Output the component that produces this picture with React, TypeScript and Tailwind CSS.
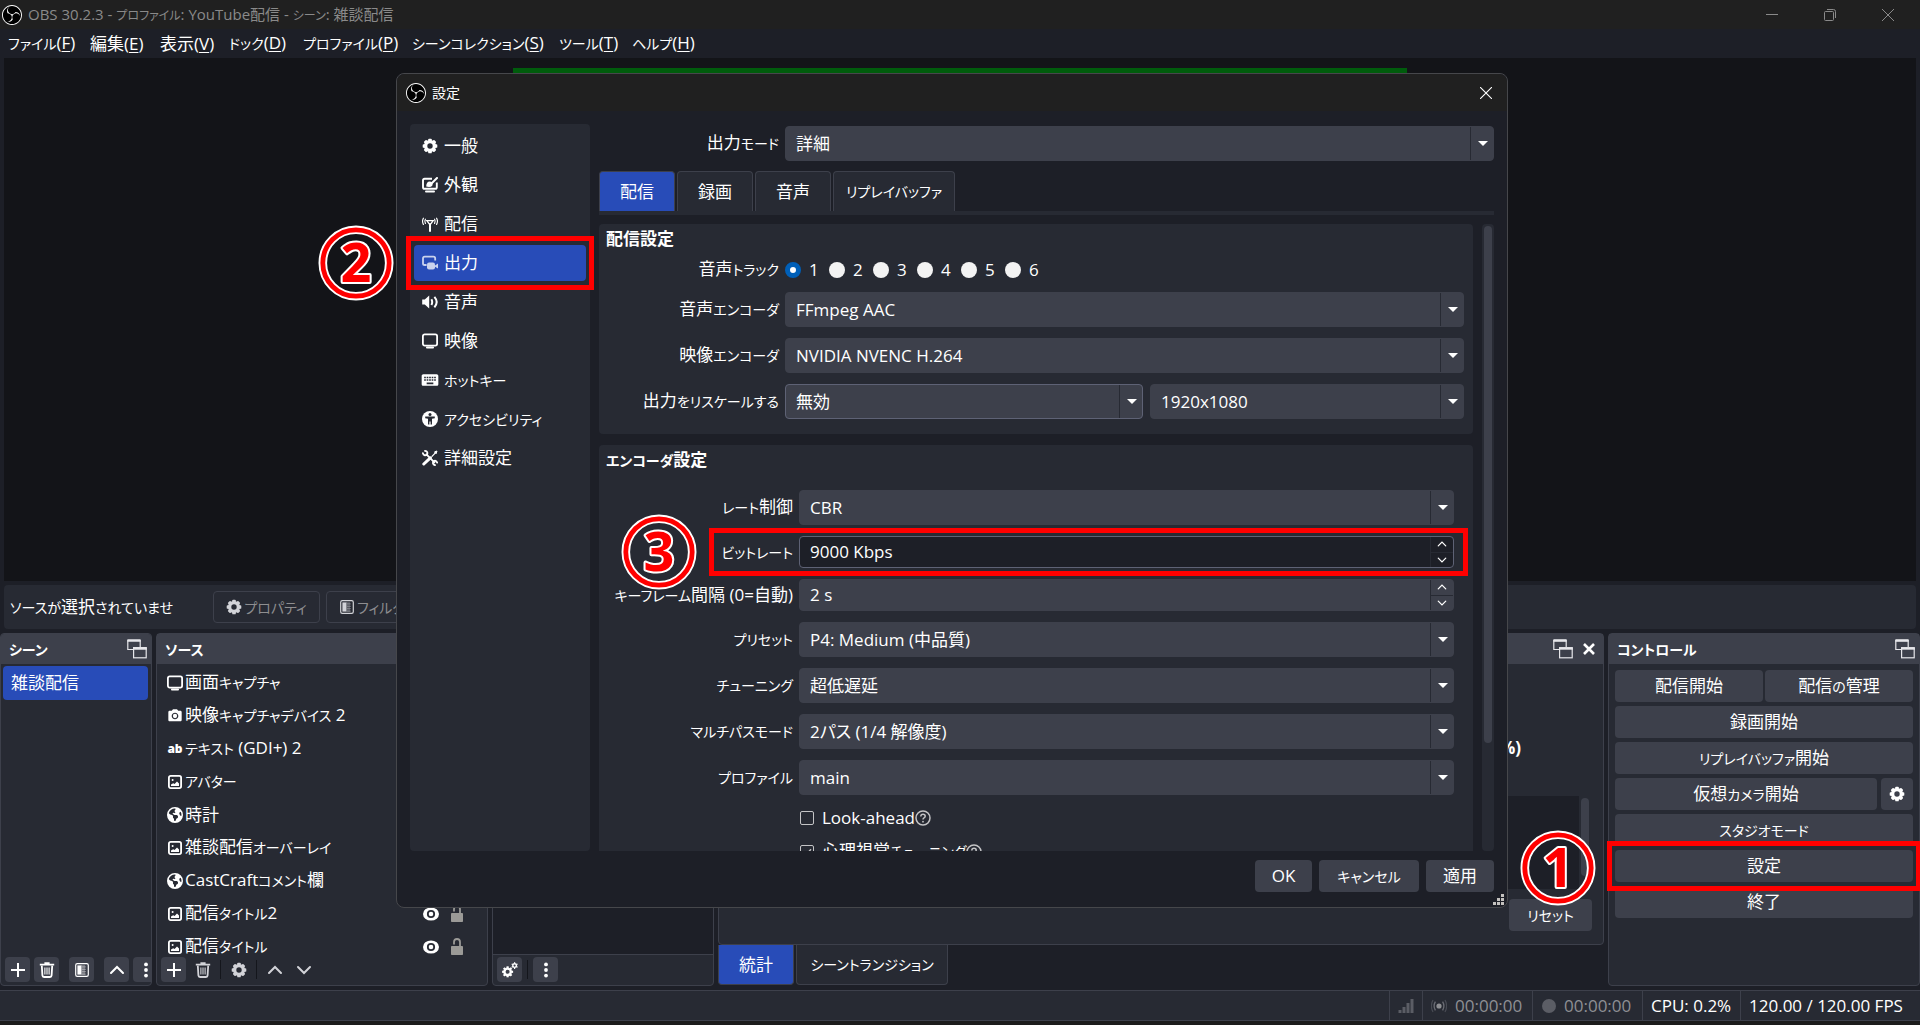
import React from "react";
import { SiObsstudio } from "react-icons/si";
import { MdKeyboard, MdPhotoCamera } from "react-icons/md";
import { FaEarthAmericas } from "react-icons/fa6";

type P = { className?: string };

/* Interface text: kana is set a step smaller than kanji and Latin. */
function T({ children, small = false }: { children: string; small?: boolean }) {
  const parts = children.split(/([\u3040-\u30ff]+)/).filter(Boolean);
  return (
    <span className="whitespace-nowrap">
      {parts.map((p, i) =>
        /[\u3040-\u30ff]/.test(p) ? (
          <span key={i} className={small ? "text-[12px]" : "text-[14px]"}>{p}</span>
        ) : (
          p
        ),
      )}
    </span>
  );
}

function Gear({ className = "size-4" }: P) {
  return (
    <svg viewBox="0 0 16 16" className={className} fill="currentColor" aria-hidden="true">
      <circle cx="8" cy="8" r="4.4" fill="none" stroke="currentColor" strokeWidth="3.4" />
      {[0, 45, 90, 135, 180, 225, 270, 315].map((a) => (
        <rect key={a} x="6.2" y="0.7" width="3.6" height="3" rx="0.9" transform={`rotate(${a} 8 8)`} />
      ))}
    </svg>
  );
}
function Monitor({ className = "size-4" }: P) {
  return (
    <svg viewBox="0 0 16 16" className={className} aria-hidden="true">
      <rect x="0.9" y="1.4" width="14.2" height="11.2" rx="1.8" fill="none" stroke="currentColor" strokeWidth="1.8" />
      <rect x="4" y="13.6" width="8" height="1.8" rx="0.9" fill="currentColor" />
    </svg>
  );
}
function Appearance() {
  return (
    <svg viewBox="0 0 16 16" className="size-4" fill="none" stroke="currentColor" aria-hidden="true">
      <path d="M10 1.8H2.6Q1 1.8 1 3.4V10.2Q1 11.8 2.6 11.8H13.2Q14.8 11.8 14.8 10.2V5.5" strokeWidth="1.9" />
      <path d="M15 1L9.5 6.5" strokeWidth="2" strokeLinecap="round" />
      <path d="M4.2 9.6Q4.4 4.4 8 4.6Q11.4 5.4 10.4 8.4Q8.8 10.8 4.2 9.6Z" fill="currentColor" stroke="none" />
      <path d="M4 14.6H12" strokeWidth="2" strokeLinecap="round" />
    </svg>
  );
}
function Antenna() {
  return (
    <svg viewBox="0 0 16 16" className="size-4" fill="none" stroke="currentColor" strokeLinecap="round" aria-hidden="true">
      <path d="M8 8V15" strokeWidth="2" />
      <path d="M4.8 4.6L8 9L11.2 4.6Z" strokeWidth="1.3" />
      <path d="M3.4 3.2Q2.2 5.2 3.4 7.4M12.6 3.2Q13.8 5.2 12.6 7.4" strokeWidth="1.2" />
      <path d="M1.4 2.2Q-0.3 5.2 1.4 8.4M14.6 2.2Q16.3 5.2 14.6 8.4" strokeWidth="1.2" />
    </svg>
  );
}
function OutputIcon() {
  return (
    <svg viewBox="0 0 16 16" className="size-4" aria-hidden="true">
      <path d="M4.6 10H2.8Q1 10 1 8.4V3.4Q1 1.6 2.8 1.6H11.4Q13.2 1.6 13.2 3.4V5.6" fill="none" stroke="currentColor" strokeWidth="1.8" />
      <rect x="5" y="7.4" width="8" height="7" rx="2" fill="currentColor" />
      <path d="M12.6 10.8L16 8.6V13.6L12.6 11.6Z" fill="currentColor" />
    </svg>
  );
}
function Speaker() {
  return (
    <svg viewBox="0 0 16 16" className="size-4" aria-hidden="true">
      <path d="M0.2 5.6H2.8L7.2 1.6V14.4L2.8 10.6H0.2Z" fill="currentColor" />
      <path d="M9.4 5.2Q11 8 9.4 10.9M12.4 2.8Q17 8 12.4 13.3" fill="none" stroke="currentColor" strokeWidth="2" />
    </svg>
  );
}
function Accessibility() {
  return (
    <svg viewBox="0 0 16 16" className="size-4" aria-hidden="true">
      <circle cx="8" cy="8" r="8" fill="currentColor" />
      <circle cx="8" cy="3.4" r="1.5" fill="#272a33" />
      <path d="M3.2 5.6H12.8V7.2L10 7.8V13.6H8.6V10.4H7.4V13.6H6V7.8L3.2 7.2Z" fill="#272a33" />
    </svg>
  );
}
function Tools() {
  return (
    <svg viewBox="0 0 16 16" className="size-4" fill="none" stroke="currentColor" strokeLinecap="round" aria-hidden="true">
      <path d="M1.8 14L8.4 7.8" strokeWidth="3" />
      <path d="M10 6.4L13.6 2.6" strokeWidth="1.3" />
      <path d="M12.8 1.8L15 1L14.2 3.4Z" strokeWidth="1" fill="currentColor" />
      <path d="M4.4 4.4L12.4 12.4" strokeWidth="1.8" />
      <path d="M3 0.9Q6.4 1.4 5 4.8Q2 6.4 0.9 3.2M15.2 12.6Q13.8 9.6 11.4 11.4Q10 14 13 15.2" strokeWidth="1.8" />
    </svg>
  );
}
function Picture() {
  return (
    <svg viewBox="0 0 16 16" className="size-4" aria-hidden="true">
      <rect x="1.9" y="1.9" width="12.2" height="12.2" rx="1.8" fill="none" stroke="currentColor" strokeWidth="1.8" />
      <circle cx="5.6" cy="6" r="1" fill="currentColor" />
      <path d="M4 12V10.6L6.2 9.2L7.6 10L10 7.4L12 9.6V12Z" fill="currentColor" />
    </svg>
  );
}
function AbIcon() {
  return <span className="w-4 text-center font-['Open_Sans'] text-xs leading-4 font-extrabold">ab</span>;
}
function FilterIcon({ className = "size-4" }: P) {
  return (
    <svg viewBox="0 0 16 16" className={className} aria-hidden="true">
      <rect x="1.7" y="1.7" width="12.6" height="12.6" rx="1.6" fill="none" stroke="currentColor" strokeWidth="1.2" />
      <rect x="3.4" y="3.4" width="4" height="9.2" fill="currentColor" />
      <path d="M8 3.4V12.6M10 3.4V12.6" stroke="currentColor" strokeWidth="1.1" strokeDasharray="1 1" />
      <path d="M9 4.4V12.6M11 4.4V12.6" stroke="currentColor" strokeWidth="0.8" strokeDasharray="1 1.4" />
    </svg>
  );
}
function Trash() {
  return (
    <svg viewBox="0 0 16 16" className="size-4" fill="none" stroke="currentColor" aria-hidden="true">
      <path d="M0.8 2.6H15.2M5.4 1H10.6" strokeWidth="1.7" />
      <path d="M2.8 3.6L3.4 13.4Q3.5 15 5 15H11Q12.5 15 12.6 13.4L13.2 3.6" strokeWidth="1.8" />
      <path d="M5.9 5.4V12.4M8 5.4V12.4M10.1 5.4V12.4" strokeWidth="1.1" />
    </svg>
  );
}
function Plus() {
  return (
    <svg viewBox="0 0 16 16" className="size-4" stroke="currentColor" strokeWidth="2" aria-hidden="true">
      <path d="M8 1V15M1 8H15" />
    </svg>
  );
}
function Chevron({ down = false, className = "size-4" }: P & { down?: boolean }) {
  return (
    <svg viewBox="0 0 16 16" className={className} fill="none" stroke="currentColor" strokeWidth="2" strokeLinecap="round" aria-hidden="true">
      <path d={down ? "M2 5L8 11L14 5" : "M2 11L8 5L14 11"} />
    </svg>
  );
}
function Dots() {
  return (
    <svg viewBox="0 0 16 16" className="size-4 shrink-0" fill="currentColor" aria-hidden="true">
      <circle cx="8" cy="2.4" r="1.9" />
      <circle cx="8" cy="8" r="1.9" />
      <circle cx="8" cy="13.6" r="1.9" />
    </svg>
  );
}
function TwinGears() {
  return (
    <svg viewBox="0 0 16 16" className="size-4" fill="currentColor" aria-hidden="true">
      <circle cx="5.6" cy="9.8" r="3.2" fill="none" stroke="currentColor" strokeWidth="2.4" />
      {[0, 45, 90, 135, 180, 225, 270, 315].map((a) => (
        <rect key={a} x="4.5" y="4.3" width="2.2" height="2" transform={`rotate(${a} 5.6 9.8)`} />
      ))}
      <circle cx="12.6" cy="3.6" r="1.8" fill="none" stroke="currentColor" strokeWidth="1.4" />
      {[0, 60, 120, 180, 240, 300].map((a) => (
        <rect key={a} x="12" y="0.2" width="1.2" height="1.4" transform={`rotate(${a} 12.6 3.6)`} />
      ))}
    </svg>
  );
}
function Popout() {
  return (
    <svg viewBox="0 0 20 20" className="size-5 shrink-0" fill="none" stroke="#e6e6ea" aria-hidden="true">
      <path d="M7 10.5H0.8V1.5H13.2V8" strokeWidth="1.2" />
      <path d="M0.4 1.5H13.6" strokeWidth="2.6" />
      <rect x="6.6" y="9" width="12.6" height="9.8" strokeWidth="1.2" />
      <path d="M6 9.4H19.8" strokeWidth="2.6" />
    </svg>
  );
}
function Eye() {
  return (
    <svg viewBox="0 0 16 14" className="h-3.5 w-4" aria-hidden="true">
      <ellipse cx="8" cy="7" rx="8" ry="6.6" fill="currentColor" />
      <circle cx="8" cy="7" r="3.2" fill="none" stroke="#272a33" strokeWidth="1.8" />
    </svg>
  );
}
function Lock() {
  return (
    <svg viewBox="0 0 12 18" className="h-[18px] w-3" aria-hidden="true">
      <path d="M3 6.6V4Q3 1 6 1T9 4V8" fill="none" stroke="#9b9a97" strokeWidth="1.8" />
      <rect x="0" y="8" width="12" height="9" rx="0.8" fill="#9b9a97" />
    </svg>
  );
}
function Help() {
  return (
    <svg viewBox="0 0 16 16" className="size-4" fill="none" stroke="#c4c4c6" aria-hidden="true">
      <circle cx="8" cy="8" r="7" strokeWidth="1.5" />
      <path d="M5.8 6.4Q5.8 4.2 8 4.2T10.2 6.2Q10.2 7.2 9 7.9Q8 8.4 8 9.6" strokeWidth="1.5" />
      <circle cx="8" cy="11.7" r="0.9" fill="#c4c4c6" stroke="none" />
    </svg>
  );
}
function ObsLogo() {
  return (
    <span className="flex size-5 shrink-0 items-center justify-center rounded-full bg-black">
      <SiObsstudio className="size-5 text-white" />
    </span>
  );
}

function Badge({ n, className }: { n: string; className: string }) {
  return (
    <svg viewBox="0 0 76 76" className={"pointer-events-none absolute z-20 size-[76px] " + className} aria-hidden="true">
      <circle cx="38" cy="38" r="33.2" fill="none" stroke="#fff" strokeWidth="8.6" />
      <circle cx="38" cy="38" r="33.2" fill="none" stroke="#f00" strokeWidth="4.8" />
      <text x="38" y="57" textAnchor="middle" fill="#f00" stroke="#fff" strokeWidth="4" paintOrder="stroke" strokeLinejoin="round" className="font-['Open_Sans'] text-[54px] font-bold">
        {n}
      </text>
    </svg>
  );
}
function RedBox({ className }: P) {
  return <span className={"pointer-events-none absolute z-10 border-[5px] border-[#ff0000] " + className} />;
}

function Select({ id, value, className = "", label }: { id: string; value: string; className?: string; label?: string }) {
  return (
    <div className={"relative h-[35px] min-w-0 " + className}>
      <select id={id} aria-label={label} className="h-full w-full appearance-none rounded border border-[#3d404b] bg-[#3d404b] pl-2.5 text-white in-[.framed]:border-[#5e6275]">
        <option>{value}</option>
      </select>
      <span className="pointer-events-none absolute inset-y-px right-0 flex w-6 items-center justify-center border-l border-[#272a33]">
        <svg viewBox="0 0 10 5" className="h-[5px] w-2.5" aria-hidden="true">
          <path d="M0 0H10L5 5Z" fill="#fff" />
        </svg>
      </span>
    </div>
  );
}
function Spin({ id, value, active = false }: { id: string; value: string; active?: boolean }) {
  return (
    <div className={"flex h-8 min-w-0 flex-1 overflow-hidden rounded border " + (active ? "border-[#5e6275] bg-[#1d1f27]" : "border-[#3d404b] bg-[#3d404b]")}>
      <input id={id} defaultValue={value} className="min-w-0 flex-1 bg-transparent pl-2.5 text-white outline-none" />
      <div className="flex w-[23px] flex-col border-l border-[#272a33]">
        <button aria-label="増やす" className="flex flex-1 items-center justify-center border-b border-[#272a33]">
          <Chevron className="size-2.5" />
        </button>
        <button aria-label="減らす" className="flex flex-1 items-center justify-center">
          <Chevron down className="size-2.5" />
        </button>
      </div>
    </div>
  );
}
function Row({ label, id, wide = false, children }: { label: string; id: string; wide?: boolean; children: React.ReactNode }) {
  return (
    <div className="relative flex items-center gap-1.5">
      <label htmlFor={id} className={"shrink-0 text-right " + (wide ? "w-[185px]" : "w-[171px]")}>
        <T>{label}</T>
      </label>
      {children}
    </div>
  );
}

const nav: [string, React.ReactNode][] = [
  ["一般", <Gear />],
  ["外観", <Appearance />],
  ["配信", <Antenna />],
  ["出力", <OutputIcon />],
  ["音声", <Speaker />],
  ["映像", <Monitor />],
  ["ホットキー", <MdKeyboard className="-mx-0.5 size-5" />],
  ["アクセシビリティ", <Accessibility />],
  ["詳細設定", <Tools />],
];

function SettingsDialog() {
  return (
    <section role="dialog" aria-label="設定" className="absolute top-[73px] right-[412px] bottom-[117px] left-[396px] z-10 flex flex-col rounded-lg border border-[#46474b] bg-[#1d1f27]">
      <header className="flex h-[37px] shrink-0 items-center rounded-t-lg bg-[#202020] pr-[13px] pl-[9px]">
        <ObsLogo />
        <h2 className="ml-1.5 flex-1 text-sm">設定</h2>
        <button aria-label="閉じる" className="p-0.5">
          <svg viewBox="0 0 12 12" className="size-3" stroke="#fff" strokeWidth="1.1" aria-hidden="true">
            <path d="M0 0L12 12M12 0L0 12" />
          </svg>
        </button>
      </header>
      <div className="flex min-h-0 flex-1 gap-[9px] px-[13px] pt-[13px]">
        <nav className="flex w-[180px] shrink-0 flex-col gap-[3px] rounded bg-[#272a33] p-1">
          {nav.map(([text, icon], i) => (
            <div key={text} className="relative">
              <button className={"flex h-9 w-full items-center gap-1.5 rounded pl-2 " + (i === 3 ? "bg-[#284cb8] text-white [&>svg]:opacity-75" : "")}>
                {icon}
                <T>{text}</T>
              </button>
              {i === 3 && (
                <>
                  <RedBox className="-inset-x-2 -inset-y-[9px]" />
                  <Badge n="2" className="-top-5 -left-24" />
                </>
              )}
            </div>
          ))}
        </nav>
        <div className="flex min-w-0 flex-1 flex-col pt-0.5">
          <div className="flex shrink-0 items-center gap-1.5">
            <label htmlFor="mode" className="w-[180px] text-right"><T>出力モード</T></label>
            <Select id="mode" value="詳細" className="flex-1" />
          </div>
          <div role="tablist" className="mt-2.5 flex shrink-0 gap-0.5 border-b-4 border-[#272a33]">
            {["配信", "録画", "音声", "リプレイバッファ"].map((t, i) => (
              <button key={t} role="tab" aria-selected={i === 0} className={"h-10 rounded-t border border-b-0 border-[#3d404b] " + (i === 0 ? "w-[76px] bg-[#284cb8]" : i === 3 ? "w-[122px] bg-[#272a33]" : "w-[76px] bg-[#272a33]")}>
                <T>{t}</T>
              </button>
            ))}
          </div>
          <div className="mt-[9px] flex min-h-0 flex-1 gap-[9px]">
            <div className="flex min-w-0 flex-1 flex-col gap-[11px] overflow-hidden">
              <fieldset className="flex shrink-0 flex-col gap-[11px] rounded bg-[#272a33] pt-1 pr-[9px] pb-[15px] pl-[9px]">
                <h3 className="-ml-0.5 h-[23px] font-bold">配信設定</h3>
                <div className="-mt-1 flex h-[23px] items-center gap-1.5">
                  <span className="w-[171px] text-right"><T>音声トラック</T></span>
                  <div className="flex">
                    {[1, 2, 3, 4, 5, 6].map((n) => (
                      <label key={n} className="flex w-11 items-center gap-2">
                        <input type="radio" name="track" defaultChecked={n === 1} className="size-4 appearance-none rounded-full bg-[#f3f3f3] checked:border-[5px] checked:border-[#005fb8] checked:bg-white" />
                        {n}
                      </label>
                    ))}
                  </div>
                </div>
                <Row label="音声エンコーダ" id="aenc"><Select id="aenc" value="FFmpeg AAC" className="flex-1" /></Row>
                <Row label="映像エンコーダ" id="venc"><Select id="venc" value="NVIDIA NVENC H.264" className="flex-1" /></Row>
                <Row label="出力をリスケールする" id="rescale">
                  <div className="flex min-w-0 flex-1 gap-[7px]">
                    <Select id="rescale" value="無効" className="framed w-[358px]" />
                    <Select id="res" label="解像度" value="1920x1080" className="flex-1" />
                  </div>
                </Row>
              </fieldset>
              <fieldset className="flex shrink-0 flex-col gap-[11px] rounded bg-[#272a33] pt-1 pr-[19px] pl-[9px]">
                <h3 className="-ml-0.5 h-[30px] font-bold"><T>エンコーダ設定</T></h3>
                <Row wide label="レート制御" id="rate"><Select id="rate" value="CBR" className="flex-1" /></Row>
                <div className="relative">
                  <Row wide label="ビットレート" id="bitrate"><Spin id="bitrate" value="9000 Kbps" active /></Row>
                  <RedBox className="-inset-y-2 -right-3.5 left-[101px]" />
                  <Badge n="3" className="-top-[22px] left-[13px]" />
                </div>
                <Row wide label="キーフレーム間隔 (0=自動)" id="key"><Spin id="key" value="2 s" /></Row>
                <Row wide label="プリセット" id="preset"><Select id="preset" value="P4: Medium (中品質)" className="flex-1" /></Row>
                <Row wide label="チューニング" id="tune"><Select id="tune" value="超低遅延" className="flex-1" /></Row>
                <Row wide label="マルチパスモード" id="pass"><Select id="pass" value="2パス (1/4 解像度)" className="flex-1" /></Row>
                <Row wide label="プロファイル" id="profile"><Select id="profile" value="main" className="flex-1" /></Row>
                {["Look-ahead", "心理視覚チューニング"].map((t, i) => (
                  <label key={t} className="ml-48 flex h-[23px] items-center">
                    <span className="relative mr-2 flex">
                      <input type="checkbox" defaultChecked={i === 1} className="size-3.5 appearance-none rounded-xs border border-[#c4c4c6]" />
                      {i === 1 && (
                        <svg viewBox="0 0 14 14" className="absolute inset-0 size-3.5" fill="none" stroke="#c4c4c6" strokeWidth="1.4" aria-hidden="true">
                          <path d="M3.5 7L6 9.8L11 4.2" />
                        </svg>
                      )}
                    </span>
                    <T>{t}</T>
                    <Help />
                  </label>
                ))}
              </fieldset>
            </div>
            <div className="w-3 shrink-0 rounded bg-[#272a33] p-0.5">
              <div className="h-[83%] rounded-sm bg-[#3d404b]" />
            </div>
          </div>
        </div>
      </div>
      <footer className="flex shrink-0 justify-end gap-[7px] pt-[9px] pr-[13px] pb-[15px]">
        <button className="h-8 w-[57px] rounded bg-[#3d404b]">OK</button>
        <button className="h-8 w-[100px] rounded bg-[#3d404b]"><T>キャンセル</T></button>
        <button className="h-8 w-[68px] rounded bg-[#3d404b]">適用</button>
      </footer>
      <svg viewBox="0 0 11 11" className="absolute right-[3px] bottom-0.5 size-[11px]" fill="#c4c2bf" aria-hidden="true">
        <path d="M8 0h3v3H8zM4 4h3v3H4zM8 4h3v3H8zM0 8h3v3H0zM4 8h3v3H4zM8 8h3v3H8z" />
      </svg>
    </section>
  );
}

function Dock({ title = "", tools, className, children }: { title?: string; tools?: React.ReactNode; className: string; children?: React.ReactNode }) {
  return (
    <section className={"flex min-w-0 flex-col rounded border border-[#3d404b] bg-[#272a33] " + className}>
      <header className="flex h-[30px] shrink-0 items-center bg-[#3d404b] pr-1 pl-2">
        <h2 className="flex-1 font-bold"><T>{title}</T></h2>
        {tools}
      </header>
      {children}
    </section>
  );
}
function ToolBtn({ label, on = true, children }: { label: string; on?: boolean; children: React.ReactNode }) {
  return (
    <button aria-label={label} className={"flex size-[25px] shrink-0 items-center justify-center overflow-hidden rounded " + (on ? "bg-[#3d404b] text-white" : "text-[#d2d3d8]")}>
      {children}
    </button>
  );
}
const Sep = () => <span className="mx-px h-[19px] w-px bg-[#14161c]" />;

const pic = <Picture />;
const globe = <FaEarthAmericas className="size-4" />;
const sources: [string, React.ReactNode][] = [
  ["画面キャプチャ", <Monitor />],
  ["映像キャプチャデバイス 2", <MdPhotoCamera className="size-4" />],
  ["テキスト (GDI+) 2", <AbIcon />],
  ["アバター", pic],
  ["時計", globe],
  ["雑談配信オーバーレイ", pic],
  ["CastCraftコメント欄", globe],
  ["配信タイトル2", pic],
  ["配信タイトル", pic],
];
const menus = [
  ["ファイル", "F", "w-[82px]"],
  ["編集", "E", "w-[70px]"],
  ["表示", "V", "w-[69px]"],
  ["ドック", "D", "w-[74px]"],
  ["プロファイル", "P", "w-[109px]"],
  ["シーンコレクション", "S", "w-[147px]"],
  ["ツール", "T", "w-[73px]"],
  ["ヘルプ", "H", "w-[73px]"],
];
const ctl = "h-8 w-full rounded bg-[#3d404b]";

export default function App() {
  return (
    <div lang="ja" className="relative flex h-screen min-h-[900px] flex-col overflow-hidden bg-[#1d1f27] font-['Open_Sans','Noto_Sans_CJK_JP',sans-serif] text-[17px] leading-[22px] text-white [font-feature-settings:'palt']">
      <header className="flex h-[29px] shrink-0 items-center bg-[#202020] pr-[26px] pl-0.5 text-[#8a8a8a]">
        <ObsLogo />
        <h1 className="ml-1.5 flex-1 text-[15px]"><T small>OBS 30.2.3 - プロファイル: YouTube配信 - シーン: 雑談配信</T></h1>
        <div className="flex items-center gap-[46px]">
          <button aria-label="最小化">
            <svg viewBox="0 0 12 12" className="size-3" stroke="currentColor" aria-hidden="true"><path d="M0 5.5H12" /></svg>
          </button>
          <button aria-label="元に戻す">
            <svg viewBox="0 0 12 12" className="size-3" fill="none" stroke="currentColor" aria-hidden="true">
              <rect x="0.5" y="2.5" width="9" height="9" rx="1" />
              <path d="M3 0.5H9.5Q11.5 0.5 11.5 2.5V9" />
            </svg>
          </button>
          <button aria-label="閉じる">
            <svg viewBox="0 0 12 12" className="size-3" stroke="currentColor" aria-hidden="true"><path d="M0 0L12 12M12 0L0 12" /></svg>
          </button>
        </div>
      </header>
      <nav className="flex h-[29px] shrink-0 items-center pl-2">
        {menus.map(([t, k, w]) => (
          <button key={t} className={"shrink-0 text-left whitespace-nowrap " + w}>
            <T>{t}</T>(<u className="underline-offset-2">{k}</u>)
          </button>
        ))}
      </nav>
      <main className="mx-1 min-h-0 flex-1 bg-[#131418] pt-2.5">
        <div className="mr-[509px] ml-[509px] h-5 bg-[#005c0c]" />
      </main>
      <div className="mx-1 my-1 flex h-11 shrink-0 items-center rounded bg-[#272a33] pl-1.5">
        <span className="w-[164px]"><T>ソースが選択されていませ</T></span>
        <button className="ml-[39px] flex h-8 w-[107px] items-center justify-center rounded border border-[#3d404b] text-[#8e8e90]">
          <Gear className="mr-0.5 size-4 text-[#d2d3d8]" /><T>プロパティ</T>
        </button>
        <button className="ml-1.5 flex h-8 w-[100px] items-center rounded border border-[#3d404b] pl-3 text-[#8e8e90]">
          <FilterIcon className="mr-0.5 size-4 text-[#d2d3d8]" /><T>フィルタ</T>
        </button>
      </div>
      <div className="flex h-[353px] shrink-0 gap-1">
        <Dock title="シーン" tools={<Popout />} className="w-[152px] shrink-0 overflow-hidden">
          <div className="flex-1 p-0.5">
            <button className="flex h-[34px] w-[145px] items-center rounded bg-[#284cb8] pl-2">雑談配信</button>
          </div>
          <div className="flex shrink-0 items-center gap-1 pb-[3px] pl-1">
            <ToolBtn label="追加"><Plus /></ToolBtn>
            <ToolBtn label="削除"><Trash /></ToolBtn>
            <Sep />
            <ToolBtn label="フィルタ"><FilterIcon /></ToolBtn>
            <Sep />
            <ToolBtn label="上へ"><Chevron /></ToolBtn>
            <ToolBtn label="その他"><Dots /></ToolBtn>
          </div>
        </Dock>
        <Dock title="ソース" tools={<Popout />} className="w-[332px] shrink-0">
          <ul className="min-h-0 flex-1 overflow-hidden pt-0.5">
            {sources.map(([t, icon], i) => (
              <li key={t} className="flex h-[33px] items-center gap-0.5 pr-6 pl-2.5">
                {icon}
                <span className="flex-1"><T>{t}</T></span>
                {i > 6 && (
                  <span className="flex items-center gap-3">
                    <button aria-label="表示"><Eye /></button>
                    <button aria-label="ロック"><Lock /></button>
                  </span>
                )}
              </li>
            ))}
          </ul>
          <div className="flex shrink-0 items-center gap-1 pb-[3px] pl-1">
            <ToolBtn label="追加"><Plus /></ToolBtn>
            <ToolBtn label="削除" on={false}><Trash /></ToolBtn>
            <Sep />
            <ToolBtn label="プロパティ" on={false}><Gear /></ToolBtn>
            <Sep />
            <ToolBtn label="上へ" on={false}><Chevron /></ToolBtn>
            <ToolBtn label="下へ" on={false}><Chevron down /></ToolBtn>
          </div>
        </Dock>
        <Dock className="w-[222px] shrink-0">
          <div className="flex-1 bg-[#1d1f27]" />
          <div className="flex shrink-0 items-center gap-1 border-t border-[#3d404b] pt-0.5 pb-[3px] pl-1">
            <ToolBtn label="音声の詳細設定"><TwinGears /></ToolBtn>
            <Sep />
            <ToolBtn label="メニュー"><Dots /></ToolBtn>
          </div>
        </Dock>
        <div className="flex min-w-0 flex-1 flex-col">
          <Dock
            className="h-[312px]"
            tools={
              <>
                <Popout />
                <button aria-label="閉じる" className="mr-1 ml-2.5">
                  <svg viewBox="0 0 12 12" className="size-3" stroke="#fff" strokeWidth="2.6" aria-hidden="true"><path d="M1 1L11 11M11 1L1 11" /></svg>
                </button>
              </>
            }
          >
            <div className="flex flex-1 flex-col items-end">
              <p className="mt-[73px] mr-[82px] font-bold">0 / 0 (0.0%)</p>
              <div className="mt-[37px] mr-3.5 flex h-[93px] gap-0.5 self-stretch">
                <div className="flex-1 bg-[#1d1f27]" />
                <div className="my-0.5 h-[78px] w-2 rounded-sm bg-[#3d404b]" />
              </div>
              <button className="mt-2.5 mr-[11px] h-8 w-[83px] rounded bg-[#3d404b]"><T>リセット</T></button>
            </div>
          </Dock>
          <div role="tablist" className="flex gap-0.5">
            <button role="tab" aria-selected="true" className="h-10 w-[76px] rounded-b border border-t-0 border-[#3d404b] bg-[#284cb8]">統計</button>
            <button role="tab" aria-selected="false" className="h-10 w-[152px] rounded-b border border-t-0 border-[#3d404b] bg-[#272a33]"><T>シーントランジション</T></button>
          </div>
        </div>
        <Dock title="コントロール" tools={<Popout />} className="w-[312px] shrink-0">
          <div className="flex flex-col gap-1 px-1.5 pt-1.5">
            <div className="flex gap-0.5">
              <button className={ctl}><T>配信開始</T></button>
              <button className={ctl}><T>配信の管理</T></button>
            </div>
            <button className={ctl}><T>録画開始</T></button>
            <button className={ctl}><T>リプレイバッファ開始</T></button>
            <div className="flex gap-1">
              <button className={ctl}><T>仮想カメラ開始</T></button>
              <button aria-label="仮想カメラの設定" className="flex size-8 shrink-0 items-center justify-center rounded bg-[#3d404b]"><Gear /></button>
            </div>
            <button className={ctl}><T>スタジオモード</T></button>
            <div className="relative h-8">
              <button className={ctl}><T>設定</T></button>
              <RedBox className="-inset-x-2 -inset-y-[9px]" />
              <Badge n="1" className="-top-5 -left-[95px]" />
            </div>
            <button className={ctl}><T>終了</T></button>
          </div>
        </Dock>
      </div>
      <footer className="mt-1 flex h-[31px] shrink-0 items-stretch justify-end border-y border-[#3d404b] bg-[#272a33] *:flex *:items-center *:border-l *:border-[#3d404b] *:whitespace-nowrap">
        <div className="w-[33px] justify-center">
          <svg viewBox="0 0 16 16" className="size-4" fill="#5b5d65" aria-hidden="true">
            <path d="M0.5 12h3v3h-3zM4.5 9h3v6h-3zM8.5 5h3v10h-3zM12.5 1h3v14h-3z" />
          </svg>
        </div>
        <div className="w-[110px] gap-2 pl-2 text-[#8e8f93]">
          <svg viewBox="0 0 16 16" className="size-4" fill="none" aria-hidden="true">
            <circle cx="8" cy="8" r="2.6" fill="#8e8f93" />
            <path d="M4.4 3.6Q1.8 8 4.4 12.4M11.6 3.6Q14.2 8 11.6 12.4" stroke="#6b6d75" strokeWidth="1.3" />
            <path d="M2 2Q-1.2 8 2 14M14 2Q17.2 8 14 14" stroke="#484b54" strokeWidth="1.2" />
          </svg>
          00:00:00
        </div>
        <div className="w-[110px] gap-2 pl-[9px] text-[#8e8f93]">
          <span className="size-3.5 rounded-full bg-[#5b5d65]" />
          00:00:00
        </div>
        <div className="w-[98px] pl-2">CPU: 0.2%</div>
        <div className="w-[180px] pl-2">120.00 / 120.00 FPS</div>
      </footer>
      <div className="h-1 shrink-0 bg-[#1c1c1c]" />
      <SettingsDialog />
    </div>
  );
}
